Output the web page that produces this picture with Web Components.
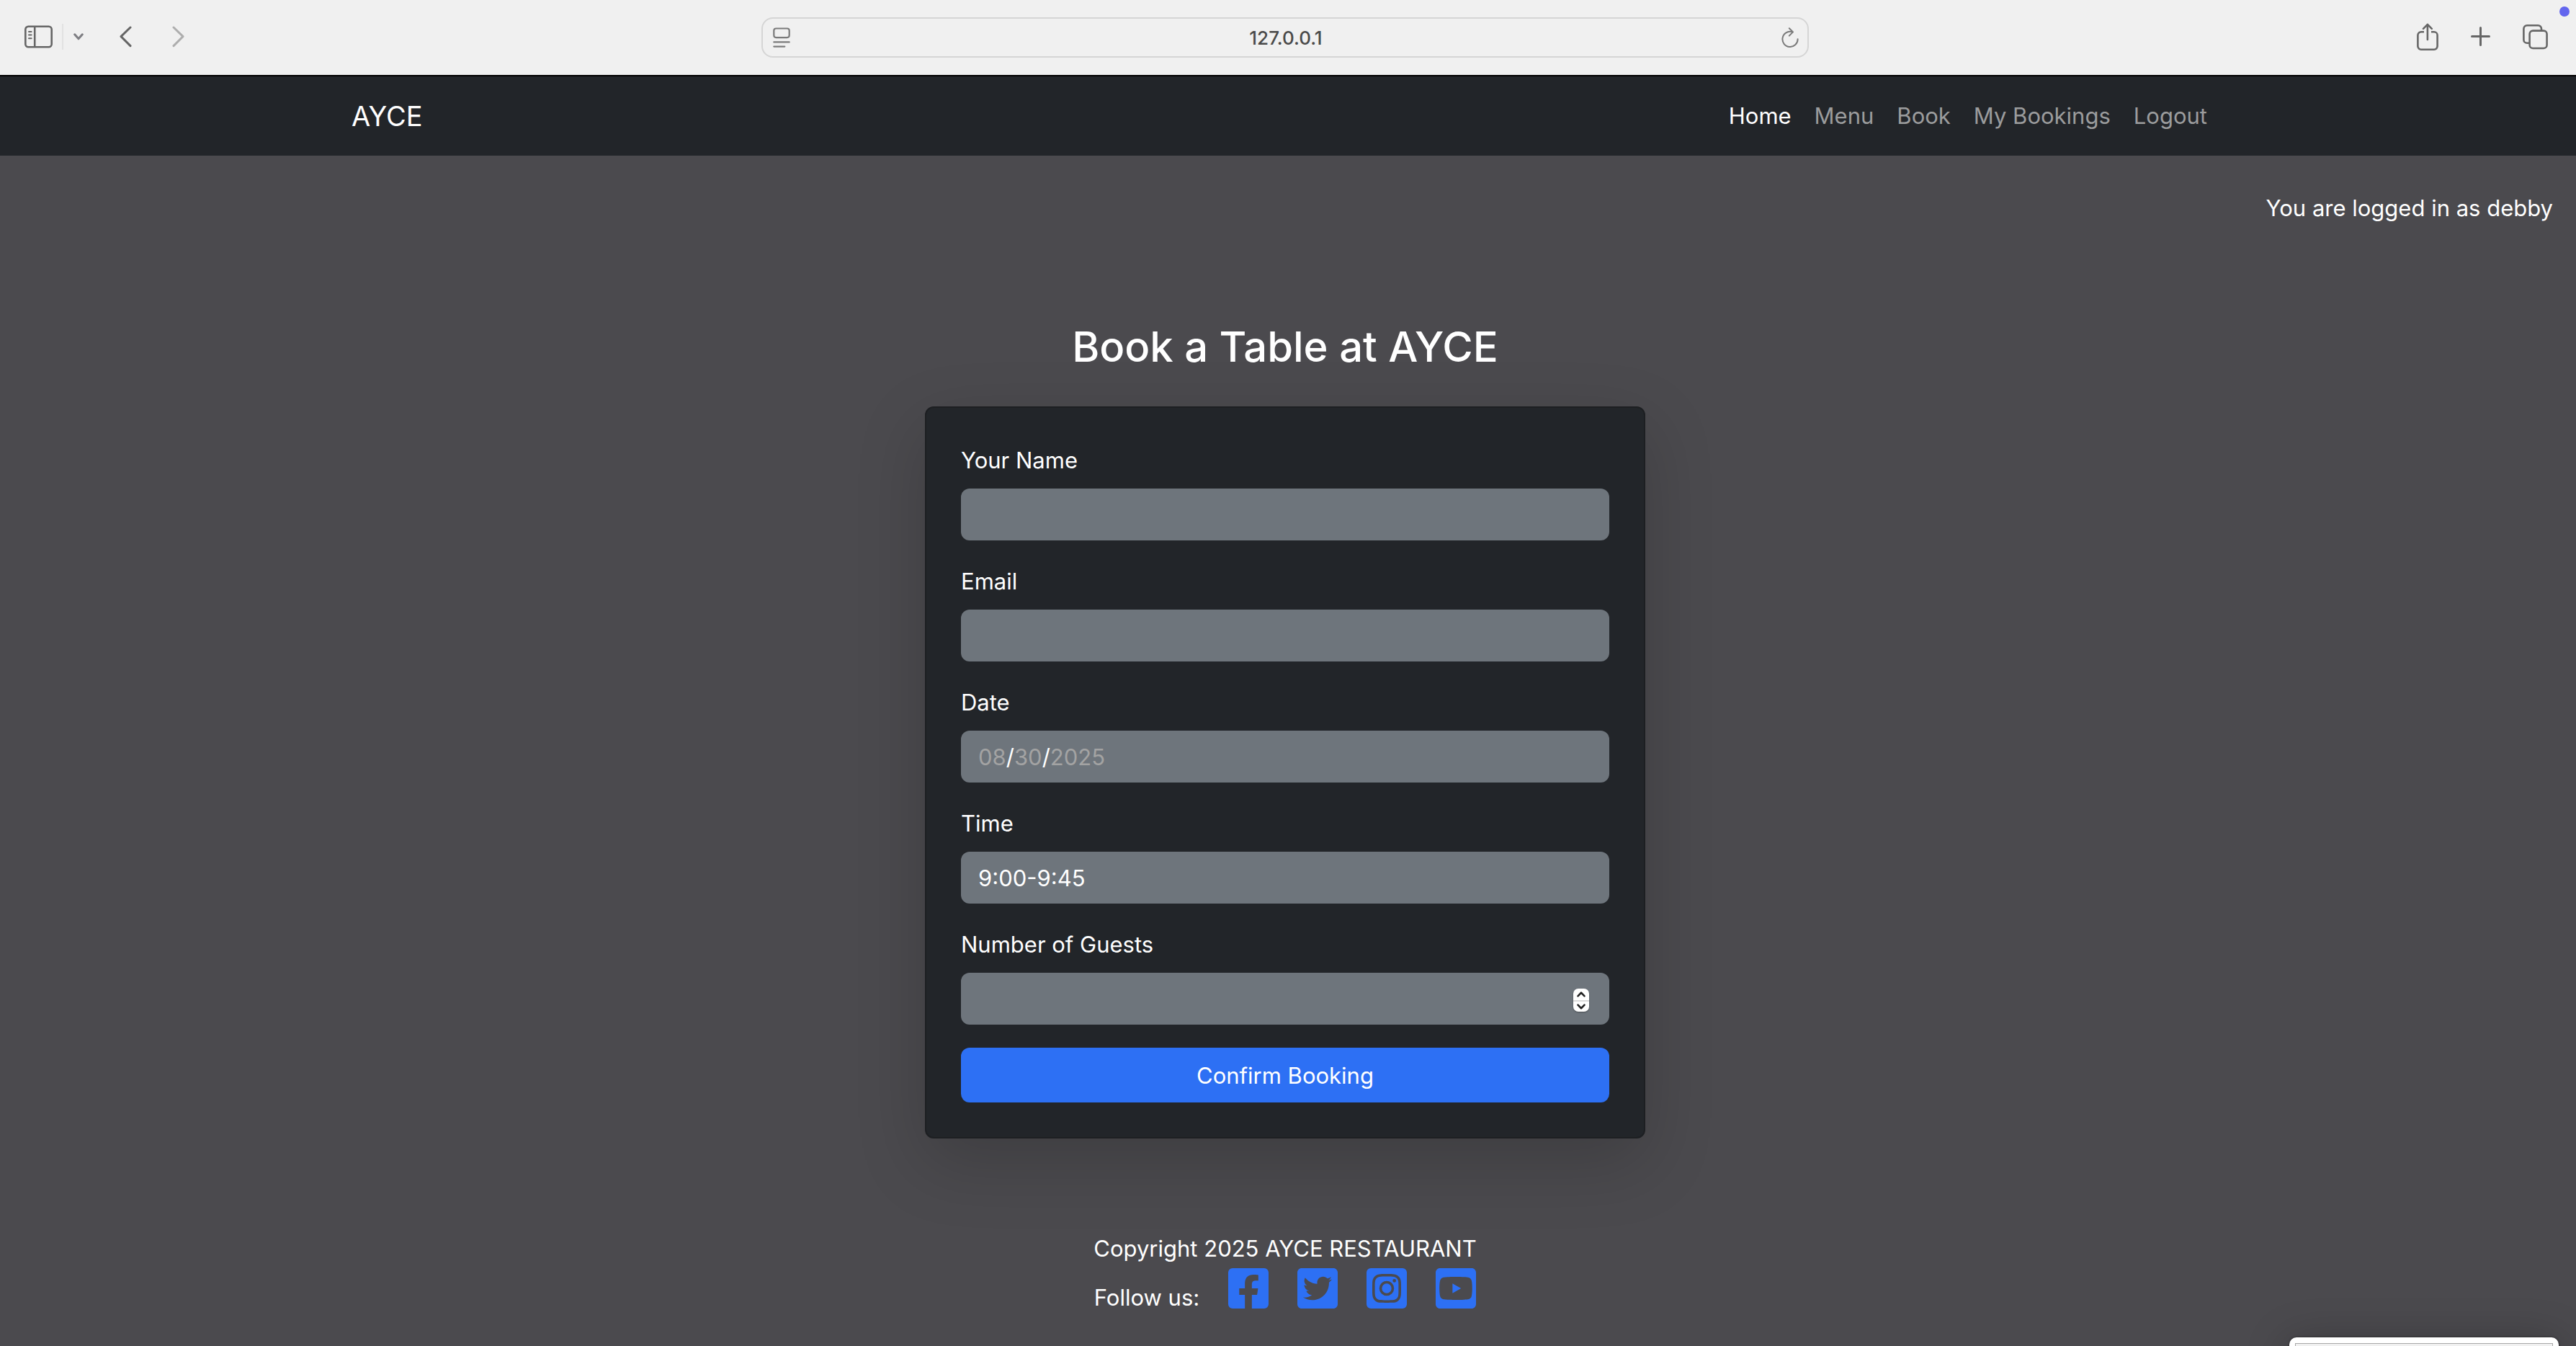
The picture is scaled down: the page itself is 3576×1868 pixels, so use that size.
<!DOCTYPE html>
<html lang="en-US">
<head>
<meta charset="utf-8">
<title>AYCE - Book a Table</title>
<style>
  html, body { margin: 0; height: 100%; }
  body {
    --chrome: #f0f0f0; --dark: #222529; --page: #4b4a4e; --field: #6e757c; --blue: #2d70f4;
    font: 400 31px/50px Inter, "Liberation Sans", sans-serif;
    color: #fff; background: var(--page); overflow: hidden;
  }
</style>
</head>
<body>
<ayce-window></ayce-window>
<script>
const define = (name, css, html, setup) => customElements.define(name, class extends HTMLElement {
  constructor() {
    super();
    this.attachShadow({ mode: 'open' }).innerHTML =
      `<style>*{box-sizing:border-box}button{font:inherit;color:inherit;background:none;border:0;padding:0;margin:0;display:flex}svg{display:block;flex:none}${css}</style>${html}`;
  }
  connectedCallback() { if (setup) setup(this, this.shadowRoot); }
});

/* Browser toolbar */
define('browser-bar', `
  :host { display: grid; grid-template-columns: 1fr minmax(400px, 1454px) 1fr; align-items: center;
    box-sizing: border-box; height: 104px; padding: 0 39px 0 31px; background: var(--chrome); color: #666; }
  .left, .right { display: flex; align-items: center; padding: 0 0 3px 3px; }
  .right { justify-content: flex-end; gap: 45px; }
  .rule { width: 2px; height: 36px; background: #e2e2e2; margin: 0 14px 0 13px; }
  .menu { color: #7e7e83; }
  .back { margin: 0 56px 0 50px; }
  .fwd { color: #aeaeae; }
  .address { display: flex; align-items: center; height: 56px; padding: 0 12px 0 14px; gap: 16px;
    border: 2px solid #d5d5d5; border-radius: 16px; }
  .address input { flex: 1; min-width: 0; border: 0; background: none; outline: 0; padding: 2px 0 0;
    font: 500 26px/32px Inter, sans-serif; text-align: center; color: #4a4a4a; }
  .dot { position: absolute; top: 9px; right: 9px; width: 14px; height: 14px; border-radius: 50%; background: #6366ee; }
`, `
  <div class="left">
    <button aria-label="Show sidebar"><svg width="39" height="32" viewBox="0 0 39 32" fill="none" stroke="currentColor" stroke-width="2.6"><rect x="1.3" y="1.8" width="36.4" height="28.4" rx="4"/><path d="M14.2 2v28"/><path d="M6 9h3.6M6 13.6h3.6M6 18.2h3.6" stroke-width="2" stroke-linecap="round"/></svg></button>
    <span class="rule"></span>
    <button class="menu" aria-label="Tab groups"><svg width="14" height="10" viewBox="0 0 14 10" fill="none" stroke="currentColor" stroke-width="3" stroke-linecap="round" stroke-linejoin="round"><path d="M1.7 1.8 7 7.8l5.3-6"/></svg></button>
    <button class="back" aria-label="Back"><svg width="17" height="30" viewBox="0 0 17 30" fill="none" stroke="currentColor" stroke-width="3" stroke-linecap="round" stroke-linejoin="round"><path d="M15 2 2 14.6 15 27.6"/></svg></button>
    <button class="fwd" aria-label="Forward"><svg width="17" height="30" viewBox="0 0 17 30" fill="none" stroke="currentColor" stroke-width="3" stroke-linecap="round" stroke-linejoin="round"><path d="M2 2l13 12.6L2 27.6"/></svg></button>
  </div>
  <div class="address">
    <button aria-label="Page menu"><svg width="24" height="28" viewBox="0 0 24 28" fill="none" stroke="#7a7a7a" stroke-width="2.2" stroke-linecap="round"><rect x="1.3" y="1.5" width="21.4" height="12.6" rx="3"/><path d="M1.3 20.4h21.4M1.3 26.6h15"/></svg></button>
    <input type="text" value="127.0.0.1" aria-label="Address">
    <button aria-label="Reload"><svg width="24" height="28" viewBox="0 0 24 28" fill="none" stroke="#7a7a7a" stroke-width="2" stroke-linecap="round" stroke-linejoin="round"><path d="M14.5 6.1A10.6 10.6 0 1 0 22.6 16.2M10.8 1.2l5.2 5.2-5.2 5.2"/></svg></button>
  </div>
  <div class="right">
    <button aria-label="Share"><svg width="30" height="38" viewBox="0 0 30 38" fill="none" stroke="currentColor" stroke-width="2.6" stroke-linecap="round" stroke-linejoin="round"><path d="M10 12.3H6a4.6 4.6 0 0 0-4.6 4.6v15.2a4.6 4.6 0 0 0 4.6 4.6h18a4.6 4.6 0 0 0 4.6-4.6V16.9a4.6 4.6 0 0 0-4.6-4.6h-4" stroke-linecap="butt"/><path d="M14.9 23V2M9 7.8l5.9-6 5.9 6"/></svg></button>
    <button aria-label="New tab"><svg width="27" height="28" viewBox="0 0 27 28" fill="none" stroke="currentColor" stroke-width="3" stroke-linecap="round"><path d="M13.5 1.5v24M1.5 13.5h24"/></svg></button>
    <button aria-label="Tab overview"><svg width="35" height="36" viewBox="0 0 35 36" fill="none" stroke="currentColor" stroke-width="2.6"><rect x="9.6" y="9.6" width="24" height="24.4" rx="4.6"/><path d="M9.4 26.8H6a4.6 4.6 0 0 1-4.6-4.6V6.9A4.6 4.6 0 0 1 6 2.3h15.4A4.6 4.6 0 0 1 26 6.9v2.6"/></svg></button>
  </div>
  <span class="dot"></span>
`);

/* Site navigation */
define('site-nav', `
  :host { display: block; background: var(--dark); border-top: 2px solid #000; padding-right: 8px; }
  .container { display: flex; align-items: center; justify-content: space-between;
    max-width: 2640px; height: 110px; margin: 0 auto; padding: 0 24px; }
  .brand { font-size: 38px; line-height: 60px; color: #fff; text-decoration: none; }
  nav { display: flex; }
`, `<div class="container"><a class="brand" href="#">AYCE</a><nav><slot></slot></nav></div>`);

define('nav-link', `
  :host { display: block; }
  a { display: block; padding: 16px; color: #9b9c9d; text-decoration: none; }
  :host([active]) a { color: #fff; }
`, `<a href="#"><slot></slot></a>`);

/* Labelled form control */
const controls = {
  text: `<input id="c" type="text">`,
  email: `<input id="c" type="email">`,
  date: `<input id="c" type="date" value="2025-08-30">`,
  time: `<select id="c"><option>9:00-9:45</option></select>`,
  guests: `<input id="c" type="number" min="1">
    <span class="stepper"><button type="button" aria-label="More guests"><svg width="12" height="8" viewBox="0 0 12 8"><path d="M1.5 6.3 6 1.7l4.5 4.6"/></svg></button><button type="button" aria-label="Fewer guests"><svg width="12" height="8" viewBox="0 0 12 8"><path d="M1.5 1.7 6 6.3l4.5-4.6"/></svg></button></span>`
};
define('form-field', `
  :host { display: flex; flex-direction: column; gap: 14px; }
  .box { display: flex; position: relative; }
  input, select { appearance: none; width: 100%; height: 72px; margin: 0; padding: 2px 24px 0; border: 0; border-radius: 12px;
    background: var(--field); color: #fff; font: inherit; outline: 0; }
  input::-webkit-inner-spin-button { appearance: none; }
  input::-webkit-calendar-picker-indicator { display: none; }
  input::-webkit-datetime-edit-month-field, input::-webkit-datetime-edit-day-field, input::-webkit-datetime-edit-year-field { color: #a3a3a3; padding: 0; }
  input::-webkit-datetime-edit-text { padding: 0; }
  .stepper { position: absolute; right: 28px; top: 22px; width: 22px; border-radius: 7px; background: #fff; box-shadow: 0 1px 2px #0005; }
  .stepper button { width: 100%; height: 16px; align-items: center; justify-content: center; }
  .stepper button + button { border-top: 2px solid #dcdcdc; }
  .stepper svg { fill: none; stroke: #222; stroke-width: 2.6; stroke-linecap: round; stroke-linejoin: round; }
`, `<label for="c"></label><div class="box"></div>`, (host, root) => {
  root.querySelector('label').textContent = host.getAttribute('label');
  root.querySelector('.box').innerHTML = controls[host.getAttribute('kind')];
  const input = root.querySelector('input[type=number]');
  if (input) {
    const [up, down] = root.querySelectorAll('.stepper button');
    up.onclick = () => input.stepUp();
    down.onclick = () => input.stepDown();
  }
});

define('booking-card', `
  :host { display: block; box-sizing: border-box; width: 100%; max-width: 1000px; padding: 48px; background: var(--dark); border: 2px solid #1d1f22;
    border-radius: 12px; box-shadow: 0 32px 96px rgba(0, 0, 0, .175); }
  form { display: flex; flex-direction: column; gap: 32px; }
  .submit { height: 76px; padding-top: 2px; align-items: center; justify-content: center; border-radius: 12px; background: var(--blue); color: #fff; }
`, `<form>
    <form-field kind="text" label="Your Name"></form-field>
    <form-field kind="email" label="Email"></form-field>
    <form-field kind="date" label="Date"></form-field>
    <form-field kind="time" label="Time"></form-field>
    <form-field kind="guests" label="Number of Guests"></form-field>
    <button class="submit" type="button">Confirm Booking</button>
  </form>`);

/* Social icons */
const logos = {
  Facebook: 'M400 32H48A48 48 0 0 0 0 80v352a48 48 0 0 0 48 48h137.25V327.69h-63V256h63v-54.64c0-62.15 37-96.48 93.67-96.48 27.14 0 55.52 4.84 55.52 4.84v61h-31.27c-30.81 0-40.42 19.12-40.42 38.73V256h68.78l-11 71.69h-57.78V480H400a48 48 0 0 0 48-48V80a48 48 0 0 0-48-48z',
  Twitter: 'M400 32H48C21.5 32 0 53.5 0 80v352c0 26.5 21.5 48 48 48h352c26.5 0 48-21.5 48-48V80c0-26.5-21.5-48-48-48zm-48.9 158.8c.2 2.8.2 5.7.2 8.5 0 86.7-66 186.6-186.6 186.6-37.2 0-71.7-10.8-100.7-29.4 5.3.6 10.4.8 15.8.8 30.7 0 58.9-10.4 81.4-28-28.8-.6-53-19.5-61.3-45.5 10.1 1.5 19.2 1.5 29.6-1.2-30-6.1-52.5-32.5-52.5-64.4v-.8c8.7 4.9 18.9 7.9 29.6 8.3a65.447 65.447 0 0 1-29.2-54.6c0-12.2 3.2-23.4 8.9-33.1 32.3 39.8 80.8 65.8 135.2 68.6-9.3-44.5 24-80.6 64-80.6 18.9 0 35.9 7.9 47.9 20.7 14.8-2.8 29-8.3 41.6-15.8-4.9 15.2-15.2 28-28.8 36.1 13.2-1.4 26-5.1 37.8-10.2-8.9 13.1-20.1 24.7-32.9 34z',
  Instagram: 'M224,202.66A53.34,53.34,0,1,0,277.36,256,53.38,53.38,0,0,0,224,202.66Zm124.71-41a54,54,0,0,0-30.41-30.41c-21-8.29-71-6.43-94.3-6.43s-73.25-1.93-94.31,6.43a54,54,0,0,0-30.41,30.41c-8.28,21-6.43,71.05-6.43,94.33S91,329.26,99.32,350.33a54,54,0,0,0,30.41,30.41c21,8.29,71,6.43,94.31,6.43s73.24,1.93,94.3-6.43a54,54,0,0,0,30.41-30.41c8.35-21,6.43-71.05,6.43-94.33S357.1,182.74,348.75,161.67ZM224,338a82,82,0,1,1,82-82A81.9,81.9,0,0,1,224,338Zm85.38-148.3a19.14,19.14,0,1,1,19.13-19.14A19.1,19.1,0,0,1,309.42,189.74ZM400,32H48A48,48,0,0,0,0,80V432a48,48,0,0,0,48,48H400a48,48,0,0,0,48-48V80A48,48,0,0,0,400,32ZM382.88,322c-1.29,25.63-7.14,48.34-25.85,67s-41.4,24.63-67,25.85c-26.41,1.49-105.59,1.49-132,0-25.63-1.29-48.26-7.15-67-25.85s-24.63-41.42-25.85-67c-1.49-26.42-1.49-105.61,0-132,1.29-25.63,7.07-48.34,25.85-67s41.47-24.56,67-25.78c26.41-1.49,105.59-1.49,132,0,25.63,1.29,48.33,7.15,67,25.85s24.63,41.42,25.85,67.05C384.37,216.44,384.37,295.56,382.88,322Z',
  YouTube: 'M186.8 202.1l95.2 54.1-95.2 54.1V202.1zM448 80v352c0 26.5-21.5 48-48 48H48c-26.5 0-48-21.5-48-48V80c0-26.5 21.5-48 48-48h352c26.5 0 48 21.5 48 48zm-42 176.3s0-59.6-7.6-88.2c-4.2-15.8-16.5-28.2-32.2-32.4C337.9 128 224 128 224 128s-113.9 0-142.2 7.7c-15.7 4.2-28 16.6-32.2 32.4-7.6 28.5-7.6 88.2-7.6 88.2s0 59.6 7.6 88.2c4.2 15.8 16.5 27.7 32.2 31.9C110.1 384 224 384 224 384s113.9 0 142.2-7.7c15.7-4.2 28-16.1 32.2-31.9 7.6-28.5 7.6-88.1 7.6-88.1z'
};
define('social-link', `
  :host { display: block; }
  a { display: block; color: var(--blue); }
`, `<a href="#"><svg width="56" height="56" viewBox="0 32 448 448" fill="currentColor"><path/></svg></a>`, (host, root) => {
  const name = host.getAttribute('name');
  root.querySelector('a').setAttribute('aria-label', name);
  root.querySelector('path').setAttribute('d', logos[name]);
});

define('site-footer', `
  :host { display: flex; flex-direction: column; align-items: center; }
  p { margin: 0; }
  .follow { display: flex; gap: 40px; }
  .follow p { margin-top: 18px; }
  .icons { display: flex; gap: 40px; margin-top: 2px; }
`, `<p>Copyright 2025 AYCE RESTAURANT</p>
  <div class="follow"><p>Follow us:</p><div class="icons"><slot></slot></div></div>`);

/* Corner of a floating preview, mostly below the window edge */
define('floating-preview', `
  :host { display: block; box-sizing: border-box; position: absolute; right: 24px; top: calc(100% - 12px); width: 374px; height: 200px; padding: 8px;
    background: #fff; border-radius: 10px; box-shadow: 0 0 3px #0008, 0 8px 60px #0004; }
  div { height: 100%; border: 1px solid #a8a8a8; background: #f0f0f0; }
`, `<div></div>`);

define('ayce-window', `
  :host { display: flex; flex-direction: column; position: relative; min-height: 100vh; overflow: hidden; }
  main { display: flex; flex-direction: column; align-items: center; padding: 48px 8px 0 0; }
  .user { align-self: flex-end; margin: 0 24px 126px 0; }
  h2 { margin: 0 0 42px; font-size: 58px; line-height: 82px; font-weight: 500; }
  site-footer { margin-top: 128px; }
`, `
  <browser-bar></browser-bar>
  <site-nav>
    <nav-link active>Home</nav-link><nav-link>Menu</nav-link><nav-link>Book</nav-link><nav-link>My Bookings</nav-link><nav-link>Logout</nav-link>
  </site-nav>
  <main>
    <p class="user">You are logged in as debby</p>
    <h2>Book a Table at AYCE</h2>
    <booking-card></booking-card>
    <site-footer>
      <social-link name="Facebook"></social-link><social-link name="Twitter"></social-link><social-link name="Instagram"></social-link><social-link name="YouTube"></social-link>
    </site-footer>
  </main>
  <floating-preview></floating-preview>
`);
</script>
</body>
</html>
